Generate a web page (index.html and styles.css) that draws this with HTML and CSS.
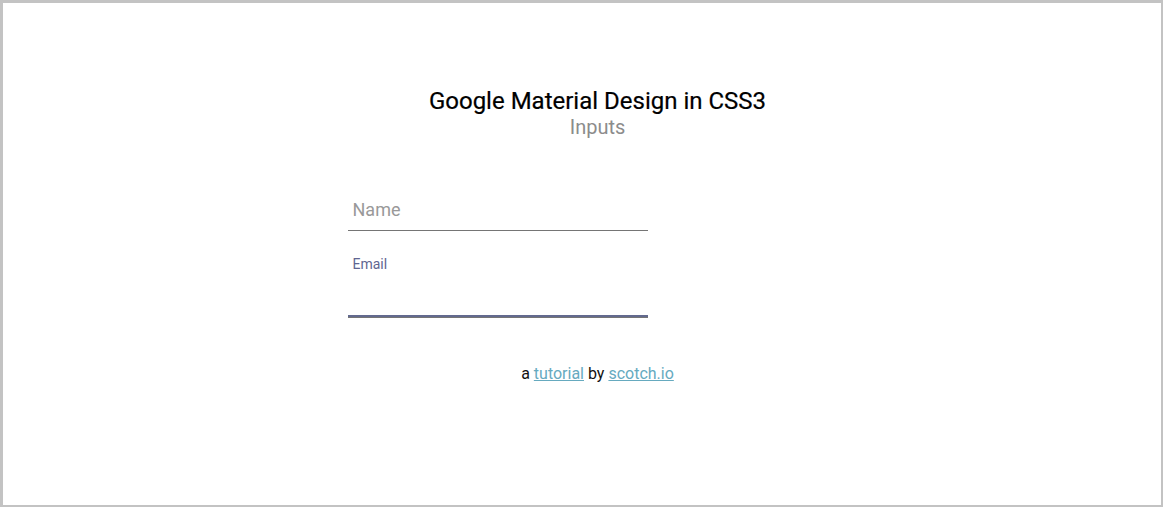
FILE: index.html
```html
<!DOCTYPE html>
<html>
<head>
<meta charset="utf-8">
<link rel="stylesheet" href="styles.css">
</head>
<body>
<div class="frame">
  <div class="container">
    <header class="heading">
      <h1 class="title">Google Material Design in CSS3</h1>
      <h3 class="subtitle">Inputs</h3>
    </header>
    <form class="form">
      <div class="group">
        <input class="field" type="text">
        <span class="bar"></span>
        <label class="label">Name</label>
      </div>
      <div class="group">
        <input class="field" type="text">
        <span class="bar bar-active"></span>
        <label class="label label-active">Email</label>
      </div>
    </form>
    <p class="footer">a <a class="link" href="#">tutorial</a> by <a class="link" href="#">scotch.io</a></p>
  </div>
</div>
</body>
</html>
```
FILE: styles.css
```css
* { box-sizing: border-box; }
html, body { margin: 0; padding: 0; background: #fff; }
body { font-family: Roboto, "Noto Sans", sans-serif; }
.frame {
  width: 1163px;
  height: 507px;
  border-style: solid;
  border-color: #c3c3c3;
  border-width: 3px 2px 2px 3px;
  padding-top: 84px;
  overflow: hidden;
}
.container { padding-left: 31px; }
.heading { text-align: center; }
.title {
  margin: 0;
  font-size: 24px;
  line-height: 28px;
  font-weight: 400;
  color: #000;
  -webkit-text-stroke: 0.2px #000;
}
.subtitle {
  margin: 0;
  font-size: 20px;
  line-height: 24px;
  font-weight: 400;
  color: #8c8c8c;
}
.form {
  width: 500px;
  margin: 50px auto 0;
}
.group {
  position: relative;
  margin-bottom: 45px;
}
.field {
  display: block;
  width: 300px;
  font-family: Roboto, sans-serif;
  font-size: 18px;
  line-height: 21px;
  height: 42px;
  padding: 10px 10px 10px 5px;
  border: none;
  border-bottom: 1px solid #757575;
  outline: none;
  background: transparent;
}
.bar { position: relative; display: block; width: 300px; }
.bar-active::before {
  content: "";
  position: absolute;
  left: 0;
  bottom: 1px;
  width: 300px;
  height: 2px;
  background: #636a8e;
}
.label {
  position: absolute;
  left: 5px;
  top: 10px;
  font-size: 18px;
  line-height: 21px;
  color: #999;
  pointer-events: none;
}
.label-active {
  top: -20px;
  font-size: 14px;
  line-height: 16px;
  color: #606591;
}
.footer {
  margin: 0;
  padding-top: 1px;
  text-align: center;
  font-size: 16px;
  line-height: 19px;
  color: #111;
}
.link { color: #66aabf; }
```
